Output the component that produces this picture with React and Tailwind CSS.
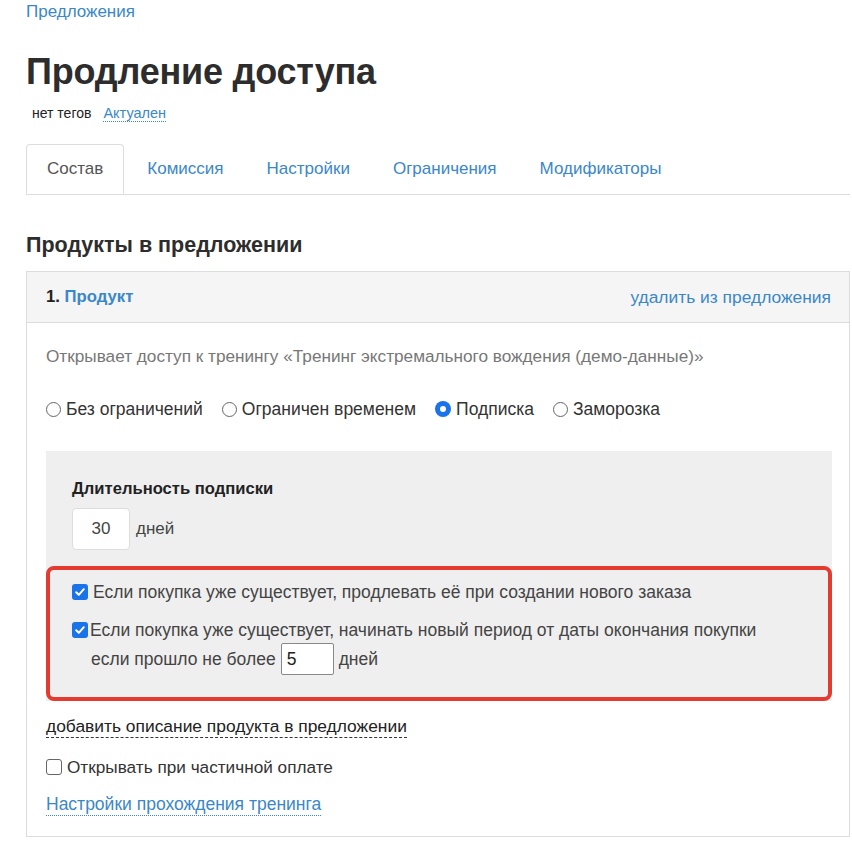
import React from "react";

const F = { fontFamily: '"Liberation Sans", Arial, sans-serif' };

function Radio({ checked, label }) {
  return (
    <label className="flex items-center">
      {checked ? (
        <span className="w-[16px] h-[16px] rounded-full bg-[#1a73e8] flex items-center justify-center">
          <span className="w-[6px] h-[6px] rounded-full bg-white" />
        </span>
      ) : (
        <span className="w-[15px] h-[15px] rounded-full border border-[#666] bg-white" />
      )}
      <span className="ml-[5px]">{label}</span>
    </label>
  );
}

function Check({ checked }) {
  return checked ? (
    <span className="w-[16px] h-[16px] rounded-[3px] bg-[#1a73e8] flex items-center justify-center shrink-0">
      <svg width="12" height="12" viewBox="0 0 12 12">
        <path d="M2.2 6.2 L4.8 8.8 L9.8 3.2" stroke="white" strokeWidth="2" fill="none" strokeLinecap="round" strokeLinejoin="round" />
      </svg>
    </span>
  ) : (
    <span className="w-[16px] h-[16px] rounded-[3px] border border-[#666] bg-white shrink-0" />
  );
}

export default function App() {
  return (
    <div className="bg-white text-[#333] pl-[26px] pr-[2px] pb-[10px] min-h-[841px]" style={F}>
      <div className="pt-[2px] text-[17px] leading-[20px] text-[#3a87c9]">Предложения</div>
      <h1 className="mt-[30px] text-[36px] leading-[40px] font-bold text-[#2d2d2d] tracking-[-0.2px]">Продление доступа</h1>
      <div className="mt-[12px] flex items-center text-[14px] leading-[18px] pl-[6px]">
        <span className="text-[#222]">нет тегов</span>
        <span className="ml-[12px] text-[#3a87c9] border-b border-dotted border-[#3a87c9] leading-[16px] text-[14.5px]">Актуален</span>
      </div>

      <div className="mt-[22px] flex border-b border-[#ddd] text-[17px]">
        <div className="h-[50px] px-[20px] flex items-center border border-[#ddd] border-b-white rounded-t-[4px] -mb-[1px] bg-white text-[#555]">Состав</div>
        <div className="h-[50px] ml-[3px] px-[20px] flex items-center text-[#3a87c9]">Комиссия</div>
        <div className="h-[50px] ml-[3px] px-[20px] flex items-center text-[#3a87c9]">Настройки</div>
        <div className="h-[50px] ml-[3px] px-[20px] flex items-center text-[#3a87c9]">Ограничения</div>
        <div className="h-[50px] ml-[3px] px-[20px] flex items-center text-[#3a87c9]">Модификаторы</div>
      </div>

      <h2 className="mt-[38px] text-[21.5px] leading-[24px] font-bold text-[#2d2d2d]">Продукты в предложении</h2>

      <div className="mt-[14px] border border-[#ddd] text-[17.3px]">
        <div className="h-[51px] bg-[#f5f5f5] border-b border-[#ddd] flex items-center justify-between pl-[19px] pr-[18px]">
          <div className="font-bold text-[16.7px]">
            <span className="text-[#222]">1. </span>
            <span className="text-[#3a87c9]">Продукт</span>
          </div>
          <span className="text-[#3a87c9] text-[17.4px]">удалить из предложения</span>
        </div>

        <div className="pl-[19px] pr-[17px]">
          <div className="mt-[23px] text-[#777] leading-[20px] text-[17.2px]">
            Открывает доступ к тренингу «Тренинг экстремального вождения (демо-данные)»
          </div>
          <div className="mt-[33px] flex items-center gap-[19px] text-[17.5px] leading-[20px] text-[#333]">
            <Radio label="Без ограничений" />
            <Radio label="Ограничен временем" />
            <Radio checked label="Подписка" />
            <Radio label="Заморозка" />
          </div>

          <div className="mt-[32px] bg-[#efefef]">
            <div className="pt-[28px] pl-[26px]">
              <div className="text-[16.6px] leading-[20px] font-bold text-[#222]">Длительность подписки</div>
              <div className="mt-[9px] flex items-center">
                <div className="w-[58px] h-[42px] bg-white border border-[#ddd] rounded-[4px] flex items-center justify-center text-[17px] text-[#444]">30</div>
                <span className="ml-[6px] text-[17px] text-[#444]">дней</span>
              </div>
            </div>
            <div className="mt-[16px] border-[4px] border-[#e53a2f] rounded-[8px] pl-[22px] pt-[10px] pb-[22px] text-[17.5px] text-[#444]">
              <div className="flex items-center leading-[24px]">
                <Check checked />
                <span className="ml-[5px]">Если покупка уже существует, продлевать её при создании нового заказа</span>
              </div>
              <div className="mt-[14px] flex items-center leading-[24px]">
                <Check checked />
                <span className="ml-[2px]">Если покупка уже существует, начинать новый период от даты окончания покупки</span>
              </div>
              <div className="mt-[1px] flex items-center pl-[19px]">
                <span>если прошло не более</span>
                <div className="ml-[5px] w-[53px] h-[32px] bg-white border border-[#888] rounded-[2px] flex items-center pl-[5px] text-[#222]">5</div>
                <span className="ml-[5px]">дней</span>
              </div>
            </div>
          </div>

          <div className="mt-[15px] text-[17.4px] leading-[20px]">
            <span className="text-[#222] border-b border-dashed border-[#333] pb-[1px]">добавить описание продукта в предложении</span>
          </div>
          <div className="mt-[21px] flex items-center text-[17.2px] leading-[20px] text-[#333]">
            <Check />
            <span className="ml-[5px]">Открывать при частичной оплате</span>
          </div>
          <div className="mt-[17px] mb-[22px] text-[17.5px] leading-[20px]">
            <span className="text-[#3a87c9] border-b border-dotted border-[#3a87c9] pb-[1px]">Настройки прохождения тренинга</span>
          </div>
        </div>
      </div>
    </div>
  );
}
